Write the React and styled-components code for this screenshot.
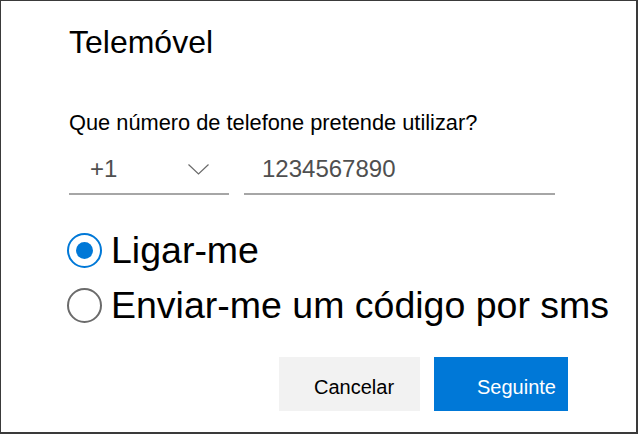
import React, { useState } from 'react';
import styled, { createGlobalStyle } from 'styled-components';

const GlobalStyle = createGlobalStyle`
    html, body {
        margin: 0;
        padding: 0;
        background: #ffffff;
    }
    body {
        font-family: "Liberation Sans", Arial, sans-serif;
    }
`;

// caixa do diálogo com a moldura escura
const Dialog = styled.div`
    box-sizing: border-box;
    width: 638px;
    height: 434px;
    border-style: solid;
    border-color: #3a3a3a;
    border-width: 1px 2px 2px 1px;
    padding: 23px 68px 0 67px;
    background: #fff;
    display: flex;
    flex-direction: column;
`;

const Title = styled.h1`
    margin: 0 0 0 1px;
    font-size: 32px;
    line-height: 36px;
    font-weight: 400;
    color: #000;
`;

const Label = styled.div`
    margin-top: 50px;
    margin-left: 1px;
    font-size: 21.8px;
    line-height: 26px;
    color: #000;
`;

const FieldRow = styled.div`
    display: flex;
    gap: 15px;
    margin-top: 18px;
    margin-left: 1px;
`;

// campo com sublinhado cinzento (indicativo e número)
const Field = styled.div`
    position: relative;
    box-sizing: border-box;
    width: ${p => p.$width}px;
    padding: 0 0 9px ${p => p.$pad}px;
    border-bottom: 2px solid #a6a6a6;
    font-size: 24px;
    line-height: 30px;
    color: #4f4f4f;
    display: flex;
    align-items: center;
`;

const Chevron = styled.svg`
    position: absolute;
    right: 20px;
    top: 10px;
`;

const Options = styled.div`
    display: flex;
    flex-direction: column;
    gap: 11px;
    margin-top: 33px;
    margin-left: -1px;
`;

const Option = styled.label`
    display: flex;
    align-items: center;
    gap: 9px;
    height: 44px;
    font-size: 37.5px;
    white-space: nowrap;
    color: #000;
    cursor: pointer;
`;

// círculo do botão de opção; o preenchido fica azul
const Circle = styled.span`
    box-sizing: border-box;
    width: 35px;
    height: 35px;
    border-radius: 50%;
    border: 2px solid ${p => (p.$checked ? '#0078d7' : '#6b6b6b')};
    display: flex;
    align-items: center;
    justify-content: center;
    flex-shrink: 0;

    &::after {
        content: '';
        display: ${p => (p.$checked ? 'block' : 'none')};
        width: 17px;
        height: 17px;
        border-radius: 50%;
        background: #0078d7;
    }
`;

const Actions = styled.div`
    display: flex;
    justify-content: flex-end;
    gap: 14px;
    margin-top: 30px;
`;

const Button = styled.button`
    box-sizing: border-box;
    width: ${p => p.$width}px;
    height: 54px;
    border: none;
    padding: 6px 0 0 ${p => p.$pad}px;
    text-align: left;
    font-family: "Liberation Sans", Arial, sans-serif;
    font-size: 20px;
    line-height: 48px;
    background: ${p => (p.$primary ? '#0078d7' : '#f2f2f2')};
    color: ${p => (p.$primary ? '#ffffff' : '#000000')};
    cursor: pointer;
`;

const options = [
    { id: 'call', label: 'Ligar-me' },
    { id: 'sms', label: 'Enviar-me um código por sms' },
];

const App = () => {
    const [method, setMethod] = useState('call');

    return (
        <>
            <GlobalStyle />
            <Dialog>
                <Title>Telemóvel</Title>
                <Label>Que número de telefone pretende utilizar?</Label>
                <FieldRow>
                    <Field $width={160} $pad={21}>
                        +1
                        <Chevron width="21" height="11" viewBox="0 0 21 11">
                            <polyline points="0.5,0.5 10.5,10 20.5,0.5" fill="none" stroke="#6a6a6a" strokeWidth="1.2" />
                        </Chevron>
                    </Field>
                    <Field $width={311} $pad={18}>1234567890</Field>
                </FieldRow>
                <Options>
                    {options.map(opt => (
                        <Option key={opt.id} onClick={() => setMethod(opt.id)}>
                            <Circle $checked={method === opt.id} />
                            {opt.label}
                        </Option>
                    ))}
                </Options>
                <Actions>
                    <Button $width={141} $pad={35}>Cancelar</Button>
                    <Button $width={134} $pad={43} $primary>Seguinte</Button>
                </Actions>
            </Dialog>
        </>
    );
};

export default App;
